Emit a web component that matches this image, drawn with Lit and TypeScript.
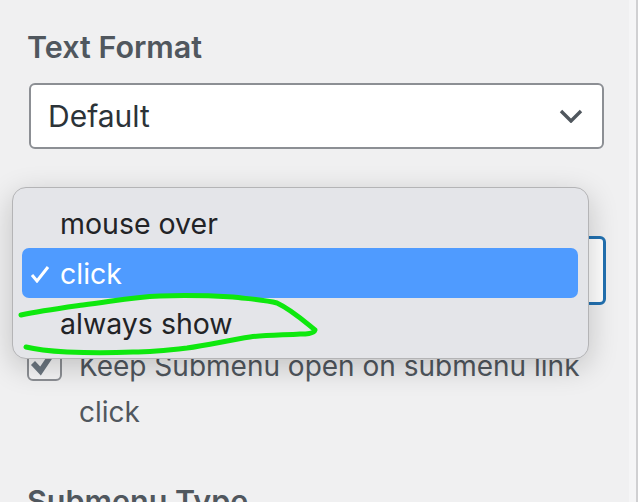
import {LitElement, html, css} from 'lit';
import {customElement} from 'lit/decorators.js';

@customElement('app-root')
export class AppRoot extends LitElement {
  static override styles = css`
    :host {
      display: block;
      position: relative;
      width: 638px;
      height: 502px;
      overflow: hidden;
      background: #f0f0f1;
      font-family: Inter, "Liberation Sans", sans-serif;
    }
    .panel {
      box-sizing: border-box;
      width: 629px;
      height: 502px;
      padding: 29px 0 0 27px;
      overflow: hidden;
    }
    .edge {
      position: absolute;
      top: 0;
      right: 0;
      width: 9px;
      height: 502px;
      background: #f5f5f6;
      border-right: 2px solid #d0d0d2;
      box-sizing: border-box;
    }
    h3 {
      margin: 0;
      font-size: 30.5px;
      line-height: 36px;
      font-weight: 600;
      color: #50575e;
    }
    .select {
      box-sizing: border-box;
      display: flex;
      align-items: center;
      justify-content: space-between;
      margin: 18px 0 0 2px;
      width: 575px;
      height: 66px;
      padding: 0 19px 0 17px;
      background: #fff;
      border: 2px solid #8c8f94;
      border-radius: 6px;
      font-size: 30px;
      color: #2c3338;
    }
    .select.focused {
      margin: 87px 0 0 2px;
      width: 577px;
      height: 69px;
      border: 3px solid #2271b1;
    }
    .check-row {
      display: flex;
      gap: 17px;
      margin-top: 38px;
      font-size: 28px;
      line-height: 46px;
      color: #50575e;
    }
    .box {
      box-sizing: border-box;
      flex: none;
      width: 35px;
      height: 35px;
      margin-top: 3px;
      border: 2px solid #8c8f94;
      border-radius: 6px;
      background: #f6f6f7;
    }
    .box svg {
      display: block;
    }
    .label {
      width: 520px;
    }
    .next {
      margin-top: 48px;
    }
    .menu {
      box-sizing: border-box;
      position: absolute;
      left: 12px;
      top: 187px;
      width: 577px;
      height: 172px;
      padding: 10px 10px 0 9px;
      background: #e4e5e9;
      border: 1px solid #b4b4b6;
      border-radius: 14px;
      box-shadow: 0 8px 30px rgba(0, 0, 0, 0.2);
      font-size: 28.5px;
      color: #222326;
    }
    .item {
      display: flex;
      align-items: center;
      height: 50px;
      padding-left: 38px;
      border-radius: 7px;
      position: relative;
    }
    .item.active {
      background: #4f9bff;
      color: #fff;
    }
    .tick {
      position: absolute;
      left: 8px;
      top: 17px;
    }
    .scribble {
      position: absolute;
      left: 0;
      top: 0;
      pointer-events: none;
    }
  `;

  override render() {
    return html`
      <div class="panel">
        <h3>Text Format</h3>
        <div class="select">
          <span>Default</span>
          <svg width="24" height="14" viewBox="0 0 24 14">
            <path d="M2 2l10 10L22 2" fill="none" stroke="#50575e" stroke-width="3.4" />
          </svg>
        </div>
        <div class="select focused"></div>
        <div class="check-row">
          <div class="box">
            <svg width="31" height="31" viewBox="0 0 31 31">
              <path d="M4 15l7.5 8L25 3" fill="none" stroke="#6c7781" stroke-width="5.5" />
            </svg>
          </div>
          <div class="label">Keep Submenu open on submenu link click</div>
        </div>
        <h3 class="next">Submenu Type</h3>
      </div>
      <div class="edge"></div>
      <div class="menu">
        <div class="item">mouse over</div>
        <div class="item active">
          <svg class="tick" width="20" height="18" viewBox="0 0 20 18">
            <path d="M2 10l5 6L18 2" fill="none" stroke="#fff" stroke-width="3" />
          </svg>
          click
        </div>
        <div class="item">always show</div>
      </div>
      <svg class="scribble" width="638" height="502" viewBox="0 0 638 502">
        <path
          d="M21 315C40 311 62 308 83 305C110 302 130 297 160 296C190 295 215 296 233 297C250 299 265 300 277 303C292 310 305 322 315 330C314 334 305 334 300 334C285 335 265 335 250 337C230 340 208 345 187 348C170 350 150 352 133 352C110 353 90 353 67 352C50 351 38 350 26 347"
          fill="none"
          stroke="#0ee80e"
          stroke-width="5"
          stroke-linecap="round"
          stroke-linejoin="round"
        />
      </svg>
    `;
  }
}

declare global {
  interface HTMLElementTagNameMap {
    'app-root': AppRoot;
  }
}
